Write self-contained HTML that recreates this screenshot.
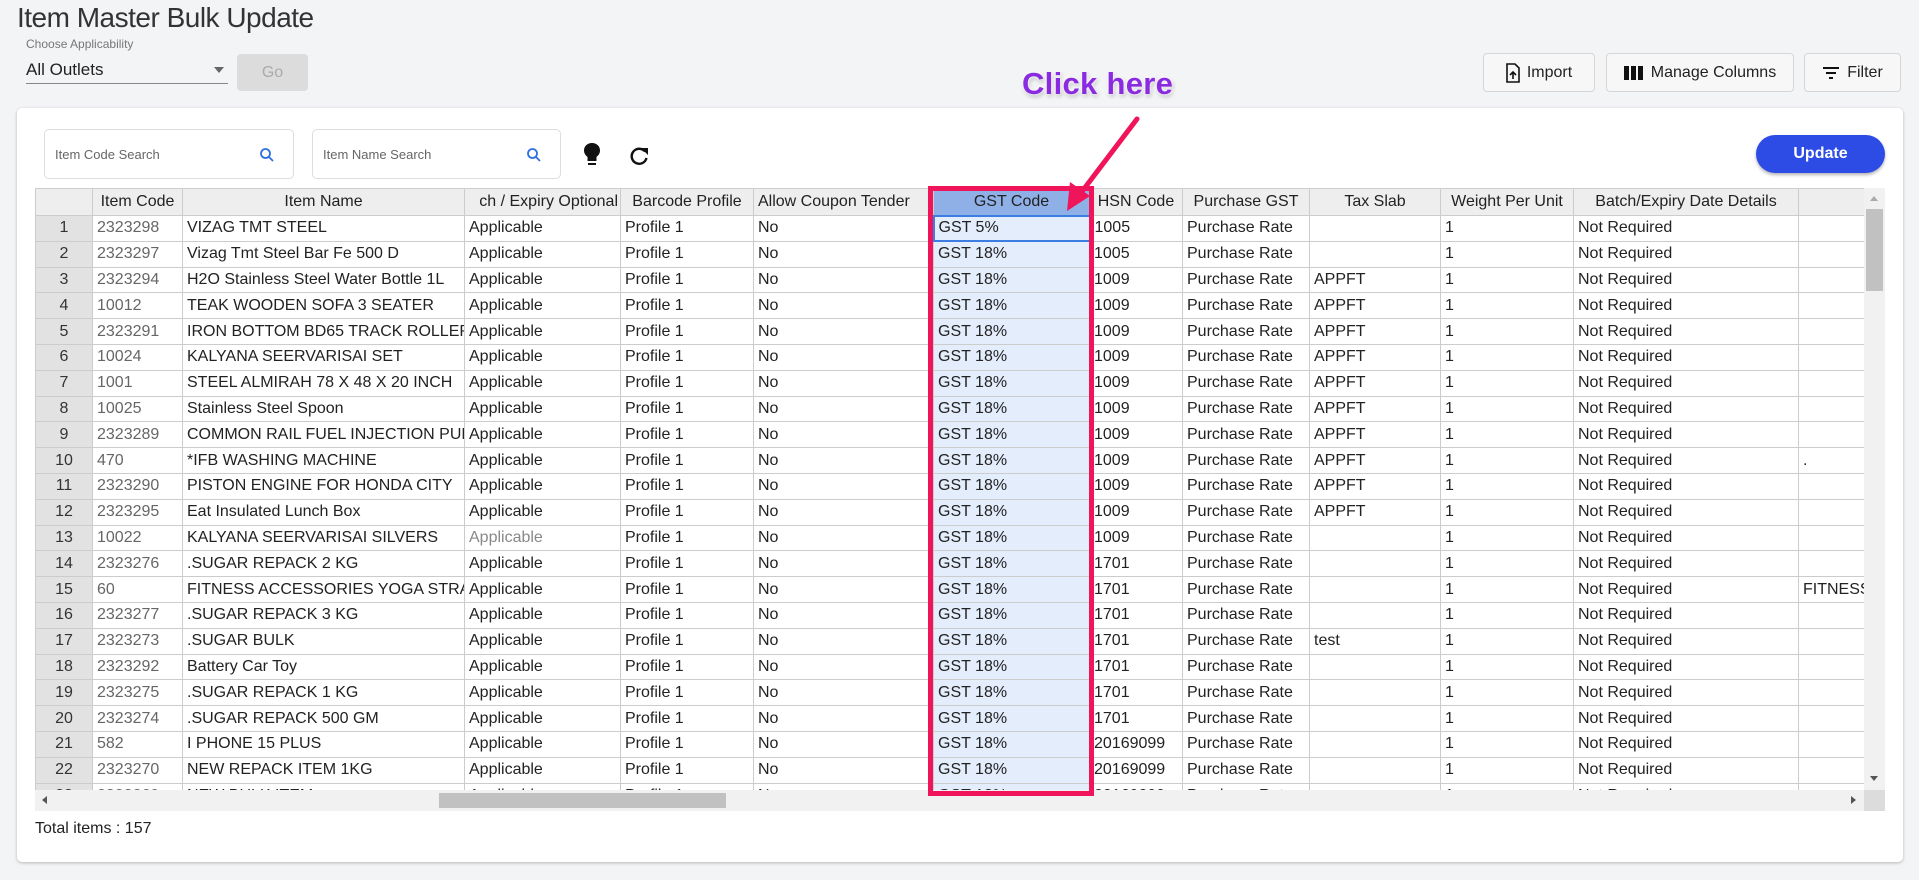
<!DOCTYPE html>
<html><head><meta charset="utf-8">
<style>
*{box-sizing:border-box;margin:0;padding:0}
body{width:1919px;height:880px;background:#f3f4f6;font-family:"Liberation Sans",Arial,sans-serif;position:relative;overflow:hidden;color:#222}
.abs{position:absolute}
.title{left:17px;top:2px;font-size:28px;color:#333;letter-spacing:-0.5px}
.btn{position:absolute;background:#f7f7f7;border:1px solid #d6d6d6;border-radius:4px;font-size:16px;color:#222;display:flex;align-items:center;justify-content:center;gap:7px}
.card{left:17px;top:108px;width:1886px;height:754px;background:#fff;border-radius:5px;box-shadow:0 1px 3px rgba(0,0,0,.25)}
.search{position:absolute;top:129px;height:50px;border:1px solid #ddd;border-radius:5px;font-size:13px;color:#666;padding-left:10px;display:flex;align-items:center}
.grid{left:35px;top:188px;width:1829px;height:602px;overflow:hidden}
table{border-collapse:collapse;table-layout:fixed;width:1912px;font-size:16px}
td,th{border:1px solid #ccc;height:25.8px;padding:0 4px;white-space:nowrap;overflow:hidden;text-align:left;font-weight:normal}
th{background:#eee;text-align:center;height:27px}
td.n{background:#e2e2e2;text-align:center;color:#333}
td.c{color:#666}
td.g{background:#e4edfc}
th.g{background:#8fb0e6}
</style></head><body>
<div class="abs title">Item Master Bulk Update</div>
<div class="abs" style="left:26px;top:37px;font-size:12px;color:#777">Choose Applicability</div>
<div class="abs" style="left:26px;top:60px;font-size:17px;color:#222">All Outlets</div>
<div class="abs" style="left:214px;top:67px;width:0;height:0;border-left:5px solid transparent;border-right:5px solid transparent;border-top:6px solid #666"></div>
<div class="abs" style="left:26px;top:83px;width:202px;height:1px;background:#888"></div>
<div class="abs" style="left:237px;top:54px;width:71px;height:37px;background:#dcdcdc;border-radius:4px;color:#aaa;font-size:16px;display:flex;align-items:center;justify-content:center">Go</div>

<div class="btn" style="left:1483px;top:53px;width:112px;height:39px"><svg width="14" height="20" viewBox="0 0 14 20"><path d="M1 1h8l4 4v14H1z" fill="none" stroke="#111" stroke-width="1.6"/><path d="M7 16V9M4 12l3-3 3 3" fill="none" stroke="#111" stroke-width="1.6"/></svg>Import</div>
<div class="btn" style="left:1606px;top:53px;width:188px;height:39px"><svg width="20" height="16" viewBox="0 0 20 16"><rect x="0" y="1" width="5" height="14" fill="#111"/><rect x="7" y="1" width="5" height="14" fill="#111"/><rect x="14" y="1" width="5" height="14" fill="#111"/></svg>Manage Columns</div>
<div class="btn" style="left:1804px;top:53px;width:97px;height:39px"><svg width="18" height="14" viewBox="0 0 18 14"><path d="M1 2h16M4 7h10M7 12h4" stroke="#111" stroke-width="2"/></svg>Filter</div>

<div class="abs card"></div>
<div class="search" style="left:44px;width:250px">Item Code Search<svg class="abs" style="left:214px;top:17px" width="16" height="16" viewBox="0 0 16 16"><circle cx="6.5" cy="6.5" r="4.5" fill="none" stroke="#2f6fe0" stroke-width="1.8"/><path d="M10 10l4 4" stroke="#2f6fe0" stroke-width="1.8"/></svg></div>
<div class="search" style="left:312px;width:249px">Item Name Search<svg class="abs" style="left:213px;top:17px" width="16" height="16" viewBox="0 0 16 16"><circle cx="6.5" cy="6.5" r="4.5" fill="none" stroke="#2f6fe0" stroke-width="1.8"/><path d="M10 10l4 4" stroke="#2f6fe0" stroke-width="1.8"/></svg></div>
<svg class="abs" style="left:582px;top:142px" width="20" height="26" viewBox="0 0 20 26"><path d="M10 1C5 1 2 4.5 2 8.5c0 3 1.8 5 3.5 6.5v4h9v-4c1.7-1.5 3.5-3.5 3.5-6.5C18 4.5 15 1 10 1z" fill="#111"/><rect x="6" y="21" width="8" height="2" fill="#111"/></svg>
<svg class="abs" style="left:628px;top:145px" width="22" height="22" viewBox="0 0 22 22"><path d="M17 6.5A7.5 7.5 0 1 0 18.5 13" fill="none" stroke="#111" stroke-width="2.4"/><path d="M13 3h7v7z" fill="#111"/></svg>
<div class="abs" style="left:1756px;top:135px;width:129px;height:38px;background:#2d4ce6;border-radius:19px;color:#fff;font-size:16px;font-weight:bold;display:flex;align-items:center;justify-content:center;box-shadow:0 2px 3px rgba(0,0,0,.3)">Update</div>

<div class="abs grid"><table>
<colgroup><col style="width:57px"><col style="width:90px"><col style="width:282px"><col style="width:156px"><col style="width:133px"><col style="width:180px"><col style="width:156px"><col style="width:93px"><col style="width:127px"><col style="width:131px"><col style="width:133px"><col style="width:225px"><col style="width:149px"></colgroup>
<tr><th></th><th>Item Code</th><th>Item Name</th><th style="text-align:right;padding-right:2px">ch / Expiry Optional</th><th>Barcode Profile</th><th style="text-align:left">Allow Coupon Tender</th><th class="g">GST Code</th><th style="padding:0 2px">HSN Code</th><th>Purchase GST</th><th>Tax Slab</th><th style="padding:0 2px">Weight Per Unit</th><th>Batch/Expiry Date Details</th><th></th></tr>
<tr><td class="n">1</td><td class="c">2323298</td><td>VIZAG TMT STEEL</td><td>Applicable</td><td>Profile 1</td><td>No</td><td class="g" style="border:2px solid #3b7de0">GST 5%</td><td>1005</td><td>Purchase Rate</td><td></td><td>1</td><td>Not Required</td><td></td></tr>
<tr><td class="n">2</td><td class="c">2323297</td><td>Vizag Tmt Steel Bar Fe 500 D</td><td>Applicable</td><td>Profile 1</td><td>No</td><td class="g">GST 18%</td><td>1005</td><td>Purchase Rate</td><td></td><td>1</td><td>Not Required</td><td></td></tr>
<tr><td class="n">3</td><td class="c">2323294</td><td>H2O Stainless Steel Water Bottle 1L</td><td>Applicable</td><td>Profile 1</td><td>No</td><td class="g">GST 18%</td><td>1009</td><td>Purchase Rate</td><td>APPFT</td><td>1</td><td>Not Required</td><td></td></tr>
<tr><td class="n">4</td><td class="c">10012</td><td>TEAK WOODEN SOFA 3 SEATER</td><td>Applicable</td><td>Profile 1</td><td>No</td><td class="g">GST 18%</td><td>1009</td><td>Purchase Rate</td><td>APPFT</td><td>1</td><td>Not Required</td><td></td></tr>
<tr><td class="n">5</td><td class="c">2323291</td><td>IRON BOTTOM BD65 TRACK ROLLER</td><td>Applicable</td><td>Profile 1</td><td>No</td><td class="g">GST 18%</td><td>1009</td><td>Purchase Rate</td><td>APPFT</td><td>1</td><td>Not Required</td><td></td></tr>
<tr><td class="n">6</td><td class="c">10024</td><td>KALYANA SEERVARISAI SET</td><td>Applicable</td><td>Profile 1</td><td>No</td><td class="g">GST 18%</td><td>1009</td><td>Purchase Rate</td><td>APPFT</td><td>1</td><td>Not Required</td><td></td></tr>
<tr><td class="n">7</td><td class="c">1001</td><td>STEEL ALMIRAH 78 X 48 X 20 INCH</td><td>Applicable</td><td>Profile 1</td><td>No</td><td class="g">GST 18%</td><td>1009</td><td>Purchase Rate</td><td>APPFT</td><td>1</td><td>Not Required</td><td></td></tr>
<tr><td class="n">8</td><td class="c">10025</td><td>Stainless Steel Spoon</td><td>Applicable</td><td>Profile 1</td><td>No</td><td class="g">GST 18%</td><td>1009</td><td>Purchase Rate</td><td>APPFT</td><td>1</td><td>Not Required</td><td></td></tr>
<tr><td class="n">9</td><td class="c">2323289</td><td>COMMON RAIL FUEL INJECTION PUMP</td><td>Applicable</td><td>Profile 1</td><td>No</td><td class="g">GST 18%</td><td>1009</td><td>Purchase Rate</td><td>APPFT</td><td>1</td><td>Not Required</td><td></td></tr>
<tr><td class="n">10</td><td class="c">470</td><td>*IFB WASHING MACHINE</td><td>Applicable</td><td>Profile 1</td><td>No</td><td class="g">GST 18%</td><td>1009</td><td>Purchase Rate</td><td>APPFT</td><td>1</td><td>Not Required</td><td>.</td></tr>
<tr><td class="n">11</td><td class="c">2323290</td><td>PISTON ENGINE FOR HONDA CITY</td><td>Applicable</td><td>Profile 1</td><td>No</td><td class="g">GST 18%</td><td>1009</td><td>Purchase Rate</td><td>APPFT</td><td>1</td><td>Not Required</td><td></td></tr>
<tr><td class="n">12</td><td class="c">2323295</td><td>Eat Insulated Lunch Box</td><td>Applicable</td><td>Profile 1</td><td>No</td><td class="g">GST 18%</td><td>1009</td><td>Purchase Rate</td><td>APPFT</td><td>1</td><td>Not Required</td><td></td></tr>
<tr><td class="n">13</td><td class="c">10022</td><td>KALYANA SEERVARISAI SILVERS</td><td style="color:#888">Applicable</td><td>Profile 1</td><td>No</td><td class="g">GST 18%</td><td>1009</td><td>Purchase Rate</td><td></td><td>1</td><td>Not Required</td><td></td></tr>
<tr><td class="n">14</td><td class="c">2323276</td><td>.SUGAR REPACK 2 KG</td><td>Applicable</td><td>Profile 1</td><td>No</td><td class="g">GST 18%</td><td>1701</td><td>Purchase Rate</td><td></td><td>1</td><td>Not Required</td><td></td></tr>
<tr><td class="n">15</td><td class="c">60</td><td>FITNESS ACCESSORIES YOGA STRAP</td><td>Applicable</td><td>Profile 1</td><td>No</td><td class="g">GST 18%</td><td>1701</td><td>Purchase Rate</td><td></td><td>1</td><td>Not Required</td><td>FITNESS</td></tr>
<tr><td class="n">16</td><td class="c">2323277</td><td>.SUGAR REPACK 3 KG</td><td>Applicable</td><td>Profile 1</td><td>No</td><td class="g">GST 18%</td><td>1701</td><td>Purchase Rate</td><td></td><td>1</td><td>Not Required</td><td></td></tr>
<tr><td class="n">17</td><td class="c">2323273</td><td>.SUGAR BULK</td><td>Applicable</td><td>Profile 1</td><td>No</td><td class="g">GST 18%</td><td>1701</td><td>Purchase Rate</td><td>test</td><td>1</td><td>Not Required</td><td></td></tr>
<tr><td class="n">18</td><td class="c">2323292</td><td>Battery Car Toy</td><td>Applicable</td><td>Profile 1</td><td>No</td><td class="g">GST 18%</td><td>1701</td><td>Purchase Rate</td><td></td><td>1</td><td>Not Required</td><td></td></tr>
<tr><td class="n">19</td><td class="c">2323275</td><td>.SUGAR REPACK 1 KG</td><td>Applicable</td><td>Profile 1</td><td>No</td><td class="g">GST 18%</td><td>1701</td><td>Purchase Rate</td><td></td><td>1</td><td>Not Required</td><td></td></tr>
<tr><td class="n">20</td><td class="c">2323274</td><td>.SUGAR REPACK 500 GM</td><td>Applicable</td><td>Profile 1</td><td>No</td><td class="g">GST 18%</td><td>1701</td><td>Purchase Rate</td><td></td><td>1</td><td>Not Required</td><td></td></tr>
<tr><td class="n">21</td><td class="c">582</td><td>I PHONE 15 PLUS</td><td>Applicable</td><td>Profile 1</td><td>No</td><td class="g">GST 18%</td><td>20169099</td><td>Purchase Rate</td><td></td><td>1</td><td>Not Required</td><td></td></tr>
<tr><td class="n">22</td><td class="c">2323270</td><td>NEW REPACK ITEM 1KG</td><td>Applicable</td><td>Profile 1</td><td>No</td><td class="g">GST 18%</td><td>20169099</td><td>Purchase Rate</td><td></td><td>1</td><td>Not Required</td><td></td></tr>
<tr><td class="n">23</td><td class="c">2323269</td><td>NEW BULK ITEM</td><td>Applicable</td><td>Profile 1</td><td>No</td><td class="g">GST 18%</td><td>20169099</td><td>Purchase Rate</td><td></td><td>1</td><td>Not Required</td><td></td></tr>
</table></div>

<!-- scrollbars -->
<div class="abs" style="left:1864px;top:188px;width:21px;height:602px;background:#f1f1f1"></div>
<div class="abs" style="left:1866px;top:209px;width:17px;height:82px;background:#c1c1c1"></div>
<div class="abs" style="left:1870px;top:196px;width:0;height:0;border-left:4px solid transparent;border-right:4px solid transparent;border-bottom:5px solid #aaa"></div>
<div class="abs" style="left:1870px;top:776px;width:0;height:0;border-left:4px solid transparent;border-right:4px solid transparent;border-top:5px solid #555"></div>
<div class="abs" style="left:35px;top:790px;width:1829px;height:21px;background:#f1f1f1"></div>
<div class="abs" style="left:439px;top:793px;width:287px;height:15px;background:#c1c1c1"></div>
<div class="abs" style="left:1864px;top:790px;width:21px;height:21px;background:#dcdcdc"></div>
<div class="abs" style="left:42px;top:796px;width:0;height:0;border-top:4px solid transparent;border-bottom:4px solid transparent;border-right:5px solid #555"></div>
<div class="abs" style="left:1851px;top:796px;width:0;height:0;border-top:4px solid transparent;border-bottom:4px solid transparent;border-left:5px solid #555"></div>

<div class="abs" style="left:35px;top:820px;font-size:16px;color:#222">Total items : 157</div>

<!-- annotation -->
<div class="abs" style="left:928px;top:186px;width:166px;height:610px;border:5px solid #f0145a"></div>
<svg class="abs" style="left:1050px;top:110px" width="100" height="110" viewBox="0 0 100 110"><path d="M87 9L24 92" stroke="#f0145a" stroke-width="5" stroke-linecap="round"/><path d="M17 101L20 72L40 86z" fill="#f0145a"/></svg>
<div class="abs" style="left:1022px;top:66px;font-size:31px;font-weight:bold;color:#8a2be2;text-shadow:0 0 3px #fff,0 0 5px #fff,1px 2px 4px rgba(0,0,0,.35);letter-spacing:0.3px">Click here</div>
</body></html>
